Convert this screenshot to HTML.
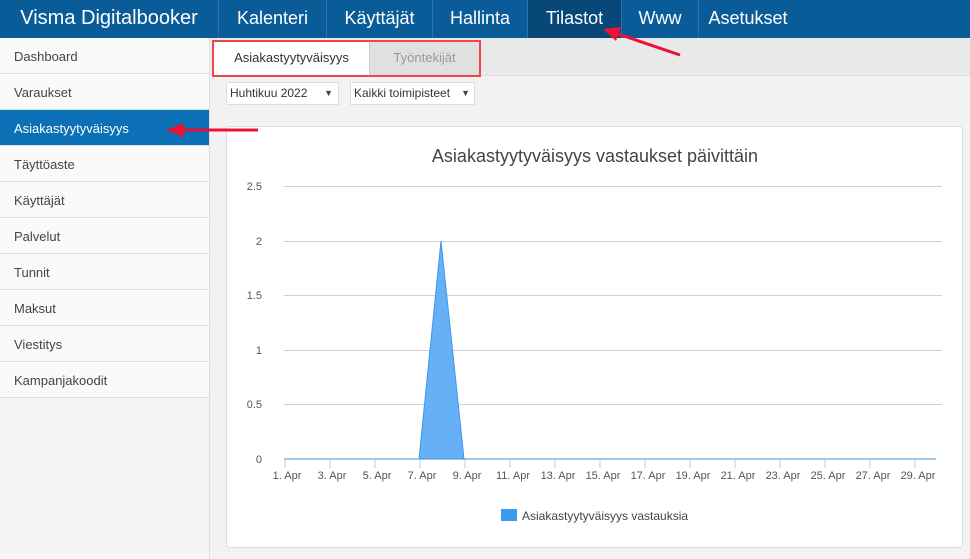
<!DOCTYPE html>
<html><head><meta charset="utf-8"><style>
*{margin:0;padding:0;box-sizing:border-box}
body{width:970px;height:559px;overflow:hidden;background:#f2f2f2;font-family:"Liberation Sans",sans-serif;position:relative}
.top{position:absolute;left:0;top:0;width:970px;height:38px;background:#0a5c99}
.top div{position:absolute;top:0;height:38px;line-height:37px;color:#fff;font-size:18px;border-right:1px solid #2b72a8;text-align:center}
.side{position:absolute;left:0;top:38px;width:210px;height:521px;background:#f5f5f5;border-right:1px solid #ddd}
.side div{height:36px;line-height:37px;padding-left:14px;font-size:13px;color:#444;border-bottom:1px solid #ddd;background:#fafafa}
.side .act{background:#0b70b5;color:#fff}
.tabs{position:absolute;left:211px;top:38px;width:759px;height:38px;background:#e9e9e9;border-bottom:1px solid #ddd}
.sel{position:absolute;top:82px;height:23px;background:#fff;border:1px solid #ddd;font-size:12px;color:#333;line-height:21px;padding-left:3px}
.card{position:absolute;left:226px;top:126px;width:737px;height:422px;background:#fff;border:1px solid #ddd;border-radius:4px}
</style></head><body>
<div class="top">
<div style="left:0;width:219px;font-size:20px">Visma Digitalbooker</div>
<div style="left:219px;width:108px">Kalenteri</div>
<div style="left:327px;width:106px">Käyttäjät</div>
<div style="left:433px;width:95px">Hallinta</div>
<div style="left:528px;width:94px;background:#074878">Tilastot</div>
<div style="left:622px;width:77px">Www</div>
<div style="left:699px;width:98px;border:none">Asetukset</div>
</div>
<div class="side">
<div>Dashboard</div><div>Varaukset</div><div class="act">Asiakastyytyväisyys</div><div>Täyttöaste</div><div>Käyttäjät</div><div>Palvelut</div><div>Tunnit</div><div>Maksut</div><div>Viestitys</div><div>Kampanjakoodit</div>
</div>
<div class="tabs"></div>
<div style="position:absolute;left:214px;top:41px;width:155px;height:34px;background:#fff;font-size:13px;color:#333;line-height:34px;text-align:center">Asiakastyytyväisyys</div>
<div style="position:absolute;left:369px;top:41px;width:110px;height:34px;background:#e0e0e0;border-left:1px solid #ccc;font-size:13px;color:#999;line-height:34px;text-align:center">Työntekijät</div>
<div style="position:absolute;left:212px;top:40px;width:269px;height:37px;border:2px solid #f0444f"></div>
<div class="sel" style="left:226px;width:113px">Huhtikuu 2022 <span style="position:absolute;right:5px;font-size:9px;color:#444">▼</span></div>
<div class="sel" style="left:350px;width:125px">Kaikki toimipisteet <span style="position:absolute;right:4px;font-size:9px;color:#444">▼</span></div>
<div class="card"></div>
<svg style="position:absolute;left:0;top:0" width="970" height="559" font-family="Liberation Sans,sans-serif">
<text x="595" y="162" text-anchor="middle" font-size="18" fill="#444">Asiakastyytyväisyys vastaukset päivittäin</text>
<g stroke="#d0d0d0" stroke-width="1">
<line x1="284" y1="186.5" x2="942" y2="186.5"/><line x1="284" y1="241.5" x2="942" y2="241.5"/>
<line x1="284" y1="295.5" x2="942" y2="295.5"/><line x1="284" y1="350.5" x2="942" y2="350.5"/>
<line x1="284" y1="404.5" x2="942" y2="404.5"/>
</g>
<g font-size="11" fill="#555" text-anchor="end">
<text x="262" y="190">2.5</text><text x="262" y="245">2</text><text x="262" y="299">1.5</text><text x="262" y="354">1</text><text x="262" y="408">0.5</text><text x="262" y="463">0</text>
</g>
<polygon points="284,459 419,459 441,241 464,459 936,459" fill="#66b0f5" stroke="#3d97ee" stroke-width="1"/>
<line x1="284" y1="459.5" x2="936" y2="459.5" stroke="#a8c4dc"/>
<g stroke="#b8cce0" id="t"></g>
<g font-size="11" fill="#555" text-anchor="middle">
<text x="287" y="479">1. Apr</text><text x="332" y="479">3. Apr</text><text x="377" y="479">5. Apr</text><text x="422" y="479">7. Apr</text><text x="467" y="479">9. Apr</text><text x="513" y="479">11. Apr</text><text x="558" y="479">13. Apr</text><text x="603" y="479">15. Apr</text><text x="648" y="479">17. Apr</text><text x="693" y="479">19. Apr</text><text x="738" y="479">21. Apr</text><text x="783" y="479">23. Apr</text><text x="828" y="479">25. Apr</text><text x="873" y="479">27. Apr</text><text x="918" y="479">29. Apr</text>
</g>
<g stroke="#b8cce0">
<line x1="285" y1="460" x2="285" y2="468"/><line x1="330" y1="460" x2="330" y2="468"/><line x1="375" y1="460" x2="375" y2="468"/><line x1="420" y1="460" x2="420" y2="468"/><line x1="465" y1="460" x2="465" y2="468"/><line x1="510" y1="460" x2="510" y2="468"/><line x1="555" y1="460" x2="555" y2="468"/><line x1="600" y1="460" x2="600" y2="468"/><line x1="645" y1="460" x2="645" y2="468"/><line x1="690" y1="460" x2="690" y2="468"/><line x1="735" y1="460" x2="735" y2="468"/><line x1="780" y1="460" x2="780" y2="468"/><line x1="825" y1="460" x2="825" y2="468"/><line x1="870" y1="460" x2="870" y2="468"/><line x1="915" y1="460" x2="915" y2="468"/>
</g>
<rect x="501" y="509" width="16" height="12" fill="#3a9af0"/>
<text x="522" y="520" font-size="12" fill="#444">Asiakastyytyväisyys vastauksia</text>
<line x1="258" y1="130" x2="182" y2="130" stroke="#ee1133" stroke-width="3"/>
<polygon points="166,130 184,123 184,137" fill="#ee1133"/>
<line x1="680" y1="55" x2="618" y2="34" stroke="#ee1133" stroke-width="3"/>
<polygon points="603,29 621,27 616,41" fill="#ee1133"/>
</svg>
</body></html>
